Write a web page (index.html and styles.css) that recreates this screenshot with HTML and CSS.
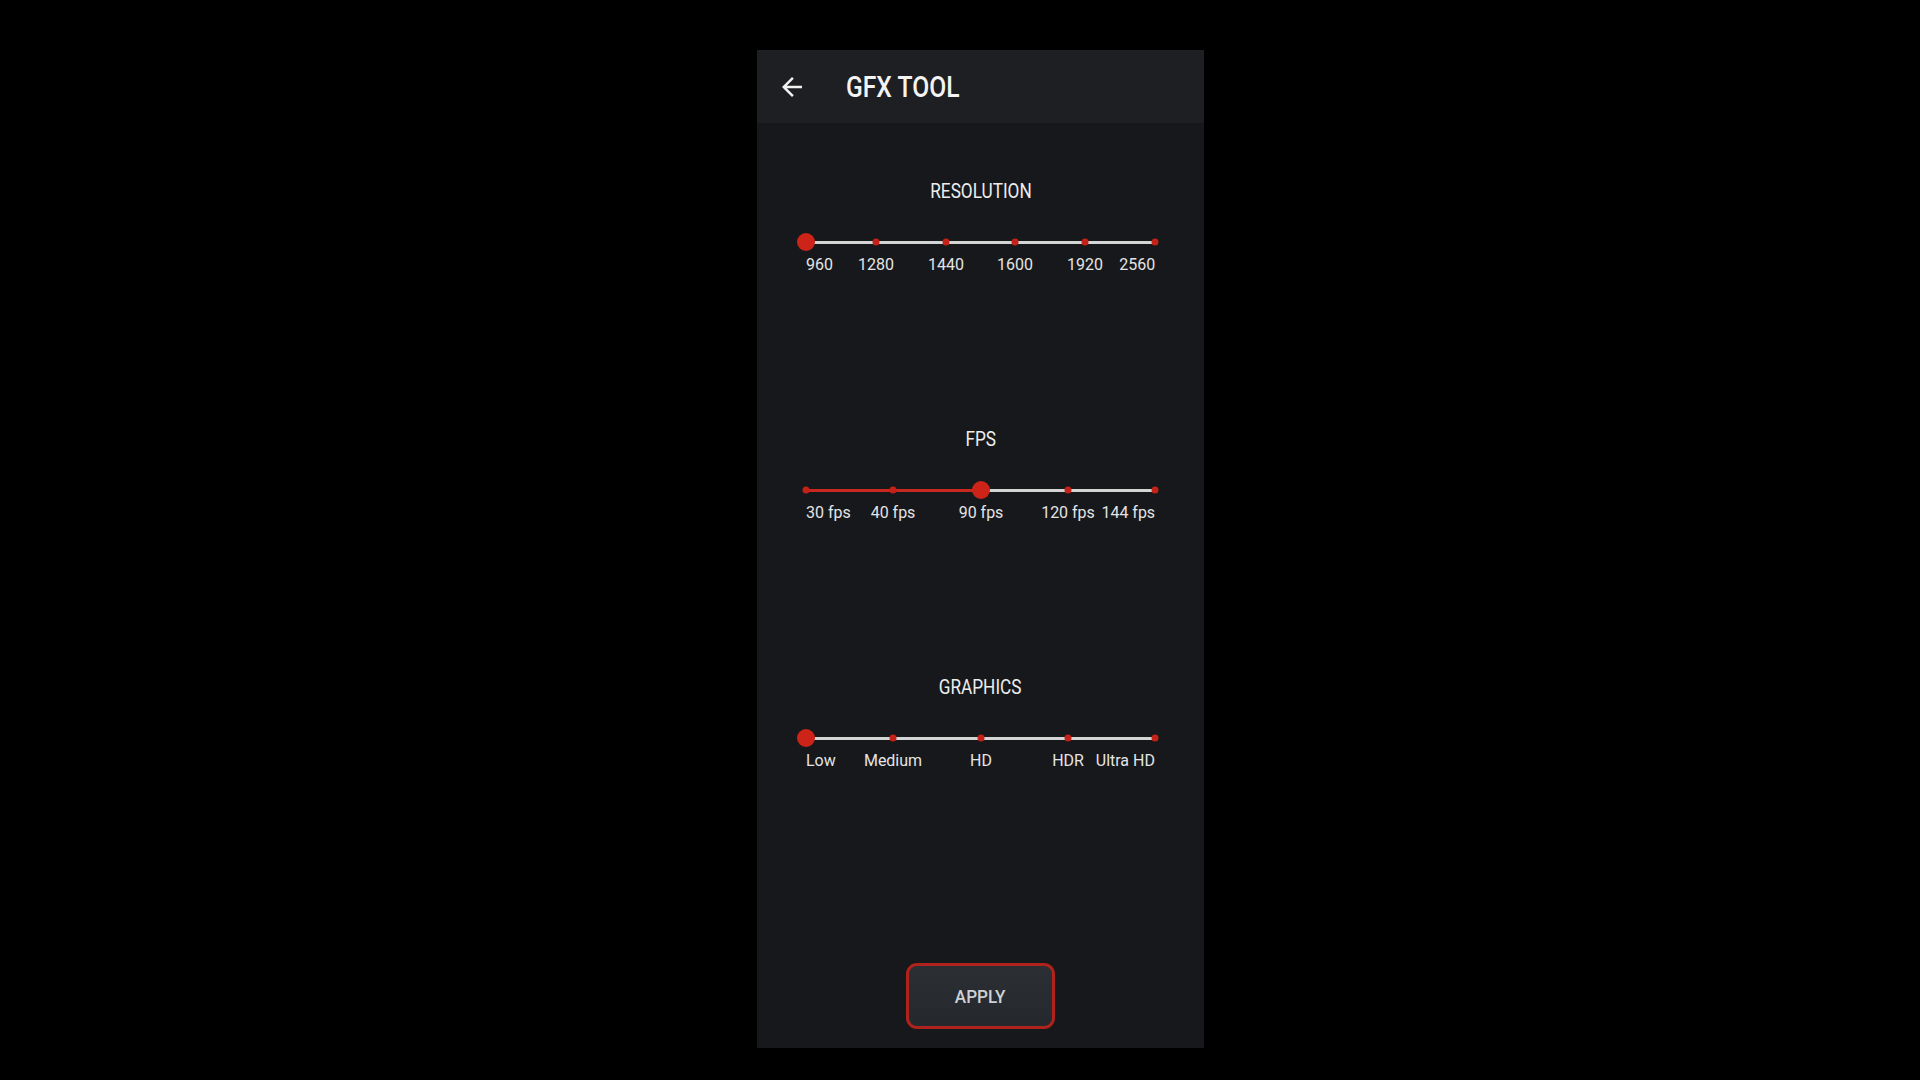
FILE: index.html
```html
<!DOCTYPE html>
<html lang="en">
<head>
<meta charset="utf-8">
<title>GFX TOOL</title>
<link rel="stylesheet" href="styles.css">
</head>
<body>
<div class="phone">
  <header class="appbar">
    <svg class="back" viewBox="0 0 24 24" aria-hidden="true"><path d="M20 11H7.83l5.59-5.59L12 4l-8 8 8 8 1.41-1.41L7.83 13H20v-2z"/></svg>
    <h1 class="title"><span>GFX TOOL</span></h1>
  </header>
  <main class="content">
    <section class="setting">
      <h2 class="setting-title"><span>RESOLUTION</span></h2>
      <div class="slider">
        <div class="track"><div class="track-active" style="width:0%"></div></div>
        <span class="tick" style="left:0%"></span>
        <span class="tick" style="left:20%"></span>
        <span class="tick" style="left:40%"></span>
        <span class="tick" style="left:60%"></span>
        <span class="tick" style="left:80%"></span>
        <span class="tick" style="left:100%"></span>
        <span class="thumb" style="left:0%"></span>
      </div>
      <div class="labels">
        <span class="label first">960</span>
        <span class="label" style="left:20%">1280</span>
        <span class="label" style="left:40%">1440</span>
        <span class="label" style="left:60%">1600</span>
        <span class="label" style="left:80%">1920</span>
        <span class="label last">2560</span>
      </div>
    </section>
    <section class="setting">
      <h2 class="setting-title"><span>FPS</span></h2>
      <div class="slider">
        <div class="track"><div class="track-active" style="width:50%"></div></div>
        <span class="tick active" style="left:0%"></span>
        <span class="tick active" style="left:25%"></span>
        <span class="tick" style="left:50%"></span>
        <span class="tick" style="left:75%"></span>
        <span class="tick" style="left:100%"></span>
        <span class="thumb" style="left:50%"></span>
      </div>
      <div class="labels">
        <span class="label first">30 fps</span>
        <span class="label" style="left:25%">40 fps</span>
        <span class="label" style="left:50%">90 fps</span>
        <span class="label" style="left:75%">120 fps</span>
        <span class="label last">144 fps</span>
      </div>
    </section>
    <section class="setting">
      <h2 class="setting-title"><span>GRAPHICS</span></h2>
      <div class="slider">
        <div class="track"><div class="track-active" style="width:0%"></div></div>
        <span class="tick" style="left:0%"></span>
        <span class="tick" style="left:25%"></span>
        <span class="tick" style="left:50%"></span>
        <span class="tick" style="left:75%"></span>
        <span class="tick" style="left:100%"></span>
        <span class="thumb" style="left:0%"></span>
      </div>
      <div class="labels">
        <span class="label first">Low</span>
        <span class="label" style="left:25%">Medium</span>
        <span class="label" style="left:50%">HD</span>
        <span class="label" style="left:75%">HDR</span>
        <span class="label last">Ultra HD</span>
      </div>
    </section>
    <div class="actions">
      <button class="apply" type="button"><span>APPLY</span></button>
    </div>
  </main>
</div>
</body>
</html>
```

FILE: styles.css
```css
html, body {
  margin: 0;
  padding: 0;
  background: #000;
  height: 100%;
  overflow: hidden;
}

body {
  font-family: Roboto, "Noto Sans", "Liberation Sans", sans-serif;
  color: #ececec;
  padding-top: 50px;
  box-sizing: border-box;
}

.phone {
  margin-left: 757px;
  width: 447px;
  height: 998px;
  background: #17181b;
  display: flex;
  flex-direction: column;
}

.appbar {
  height: 73px;
  flex: none;
  background: #1e1f22;
  display: flex;
  align-items: center;
  padding-left: 20px;
}

.back {
  width: 30px;
  height: 30px;
  fill: #f2f2f2;
  flex: none;
}

.title {
  margin: 0 0 0 39px;
  font-size: 29px;
  font-weight: 500;
  line-height: 34px;
  color: #f4f4f4;
}

.title span {
  display: inline-block;
  transform: scaleX(0.85);
  transform-origin: left center;
}

.content {
  flex: 1;
  display: flex;
  flex-direction: column;
  padding: 56px 49px 19px;
}

.setting + .setting {
  margin-top: 153px;
}

.setting-title {
  margin: 0;
  text-align: center;
  font-size: 20px;
  font-weight: 400;
  line-height: 24px;
  color: #ededed;
}

.setting-title span {
  display: inline-block;
  transform: scaleX(0.86);
}

.slider {
  position: relative;
  height: 20px;
  margin-top: 29px;
  display: flex;
  align-items: center;
}

.track {
  flex: 1;
  height: 3px;
  background: #d4d4d4;
  border-radius: 2px;
  display: flex;
}

.track-active {
  height: 100%;
  background: #c8281d;
}

.tick {
  position: absolute;
  top: 50%;
  width: 7px;
  height: 7px;
  border-radius: 50%;
  background: #c42118;
  transform: translate(-50%, -50%);
}

.thumb {
  position: absolute;
  top: 50%;
  width: 18px;
  height: 18px;
  border-radius: 50%;
  background: #cc2418;
  transform: translate(-50%, -50%);
}

.labels {
  position: relative;
  height: 20px;
  margin-top: 2px;
}

.label {
  position: absolute;
  top: 0;
  font-size: 17px;
  line-height: 20px;
  color: #e4e4e4;
  white-space: nowrap;
  transform: translateX(-50%) scaleX(0.94);
}

.label.first {
  left: 0;
  transform: scaleX(0.94);
  transform-origin: left center;
}

.label.last {
  right: 0;
  transform: scaleX(0.94);
  transform-origin: right center;
}

.actions {
  margin-top: auto;
  display: flex;
  justify-content: center;
}

.apply {
  width: 149px;
  height: 66px;
  box-sizing: border-box;
  border: 3px solid #b0231c;
  border-radius: 11px;
  background: linear-gradient(#2b2f34, #25292d);
  color: #cdd1d5;
  font-family: Roboto, "Noto Sans", "Liberation Sans", sans-serif;
  font-size: 19px;
  font-weight: 500;
  padding: 0;
  cursor: pointer;
}

.apply span {
  display: inline-block;
  transform: scaleX(0.9);
}
```
